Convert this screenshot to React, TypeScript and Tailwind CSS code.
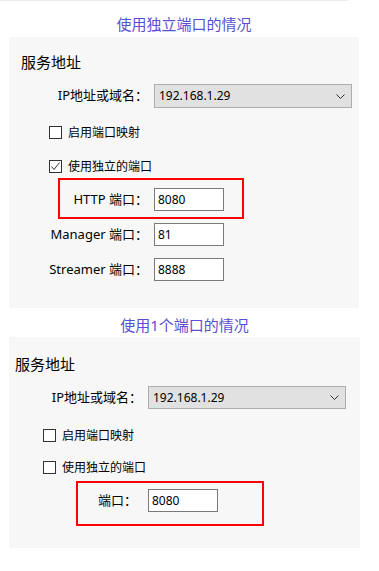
import React from "react";

const font = "font-['Noto_Sans','Noto_Sans_CJK_SC',sans-serif]";

function Checkbox({ checked }: { checked?: boolean }) {
    return (
        <div className="w-[13px] h-[13px] border border-[#333333] bg-white flex items-center justify-center shrink-0">
            {checked && (
                <svg width="11" height="11" viewBox="0 0 11 11">
                    <polyline points="1.5,5.5 4,8.5 9.5,1.5" fill="none" stroke="#333333" strokeWidth="1" />
                </svg>
            )}
        </div>
    );
}

function Select({ value, h }: { value: string; h: string }) {
    return (
        <div className={`ml-[6px] w-[198px] ${h} bg-[#e1e1e1] border border-[#adadad] flex items-center justify-between pl-[4px] pr-[6px]`}>
            <span className="text-[12px] text-black">{value}</span>
            <svg width="9" height="5" viewBox="0 0 9 5">
                <polyline points="0.5,0.5 4.5,4.5 8.5,0.5" fill="none" stroke="#333333" strokeWidth="1" />
            </svg>
        </div>
    );
}

function Input({ value }: { value: string }) {
    return (
        <div className="w-[70px] h-[23px] bg-white border border-[#7a7a7a] flex items-center pl-[3px]">
            <span className="text-[12px] text-black">{value}</span>
        </div>
    );
}

export default function App() {
    return (
        <div className={`w-[379px] h-[571px] bg-white overflow-hidden text-black ${font}`}>
            <div className="h-px w-[348px] bg-[#ededed]" />

            {/* 第一种情况 */}
            <div className="ml-[9px] w-[350px]">
                <div className="h-[36px] pt-[13px] text-center text-[15px] leading-[20px] text-[#5a4fd2]">
                    使用独立端口的情况
                </div>
                <div className="h-[271px] bg-[#f7f7f7] pl-[12px] pt-[15px]">
                    <div className="text-[15px] leading-[20px]">服务地址</div>
                    <div className="flex items-center mt-[12px]">
                        <div className="w-[127px] text-right text-[13px]">IP地址或域名：</div>
                        <Select value="192.168.1.29" h="h-[24px]" />
                    </div>
                    <div className="flex items-center gap-[6px] ml-[28px] mt-[18px] h-[13px]">
                        <Checkbox />
                        <span className="text-[12px]">启用端口映射</span>
                    </div>
                    <div className="flex items-center gap-[6px] ml-[28px] mt-[21px] h-[13px]">
                        <Checkbox checked />
                        <span className="text-[12px]">使用独立的端口</span>
                    </div>
                    <div className="ml-[37px] mt-[5px] w-[186px] h-[41px] border-2 border-[#ff0000] pt-[8px] flex items-start">
                        <div className="w-[88px] h-[23px] flex items-center justify-end text-[13px]">HTTP 端口：</div>
                        <div className="ml-[6px]"><Input value="8080" /></div>
                    </div>
                    <div className="flex items-center mt-[4px]">
                        <div className="w-[127px] text-right text-[13px]">Manager 端口：</div>
                        <div className="ml-[6px]"><Input value="81" /></div>
                    </div>
                    <div className="flex items-center mt-[12px]">
                        <div className="w-[127px] text-right text-[13px]">Streamer 端口：</div>
                        <div className="ml-[6px]"><Input value="8888" /></div>
                    </div>
                </div>
            </div>

            {/* 第二种情况 */}
            <div className="ml-[9px] w-[351px]">
                <div className="h-[29px] pt-[7px] text-center text-[15px] leading-[20px] text-[#5a4fd2]">
                    使用1个端口的情况
                </div>
                <div className="h-[211px] bg-[#f7f7f7] pl-[6px] pt-[17px]">
                    <div className="text-[15px] leading-[20px]">服务地址</div>
                    <div className="flex items-center mt-[12px]">
                        <div className="w-[127px] text-right text-[13px]">IP地址或域名：</div>
                        <Select value="192.168.1.29" h="h-[23px]" />
                    </div>
                    <div className="flex items-center gap-[6px] ml-[28px] mt-[20px] h-[13px]">
                        <Checkbox />
                        <span className="text-[12px]">启用端口映射</span>
                    </div>
                    <div className="flex items-center gap-[6px] ml-[28px] mt-[19px] h-[13px]">
                        <Checkbox />
                        <span className="text-[12px]">使用独立的端口</span>
                    </div>
                    <div className="ml-[61px] mt-[7px] w-[188px] h-[45px] border-2 border-[#ff0000] pt-[6px] flex items-start">
                        <div className="w-[59px] h-[23px] flex items-center justify-end text-[13px]">端口：</div>
                        <div className="ml-[11px]"><Input value="8080" /></div>
                    </div>
                </div>
            </div>
        </div>
    );
}
